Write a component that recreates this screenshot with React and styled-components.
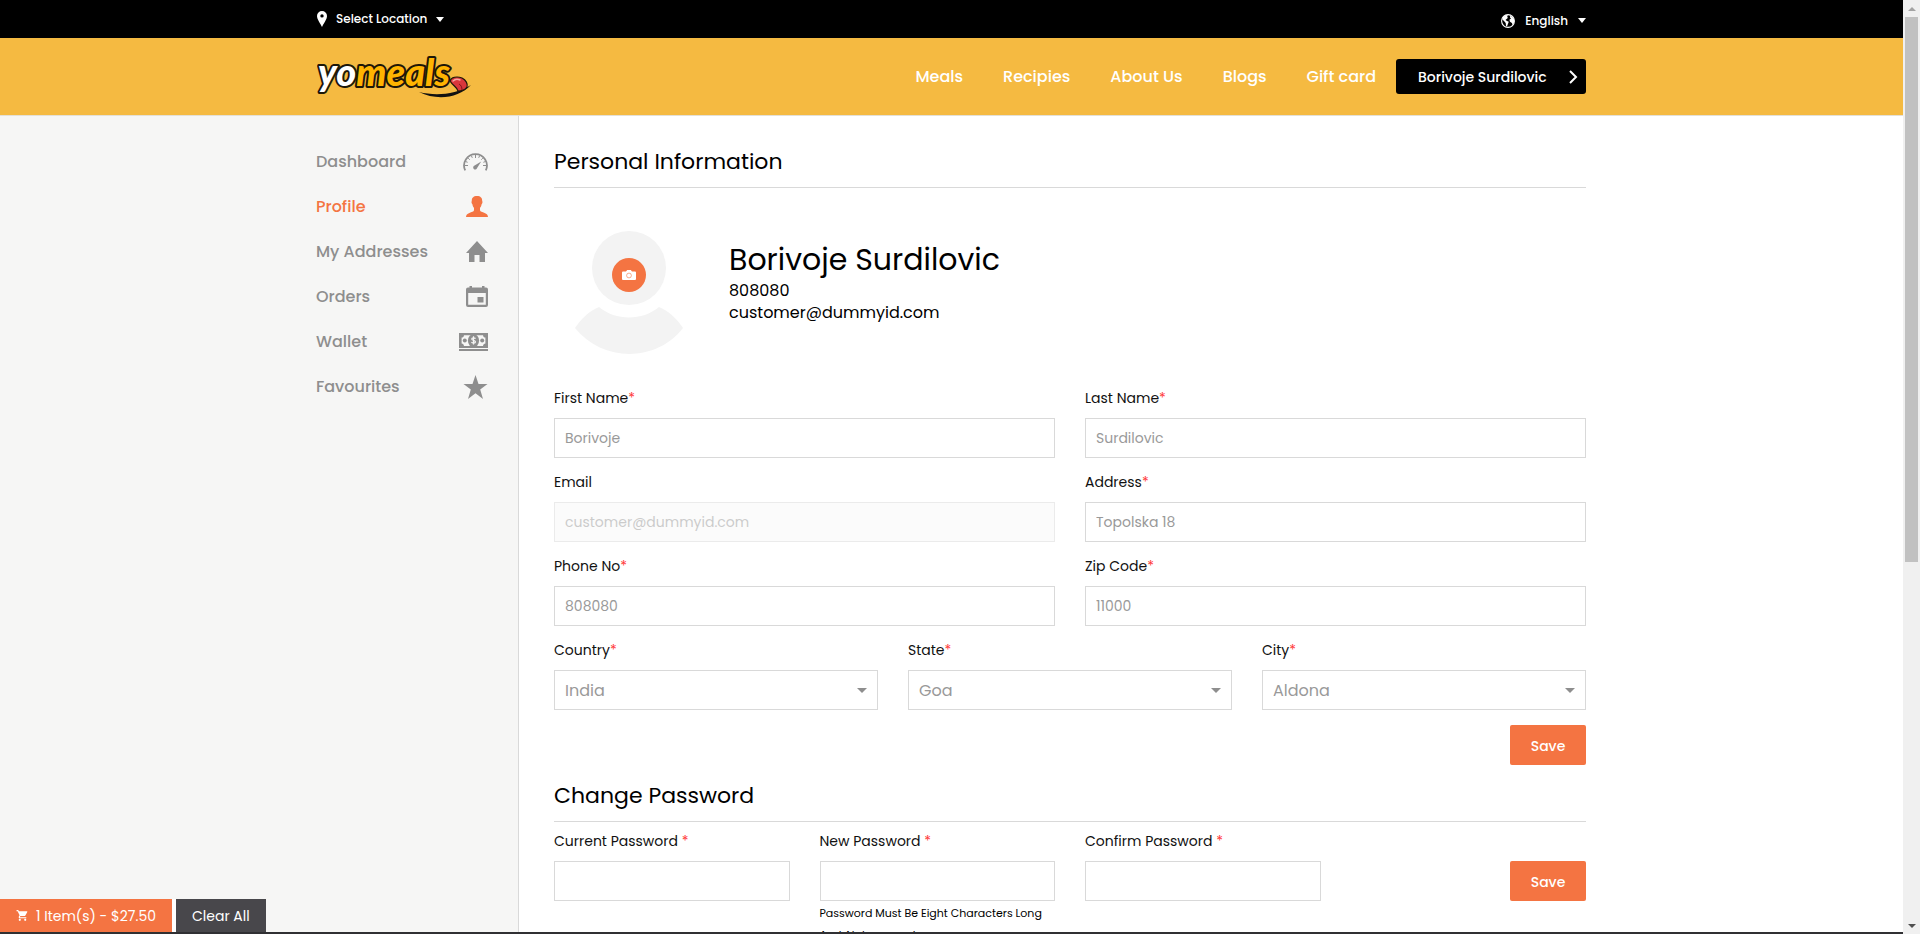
import React from "react";
import styled, { createGlobalStyle, css } from "styled-components";
import { MdShoppingCart } from "react-icons/md";

const orange = "#f47442";
const grey = "#8e8e8e";
const line = "#d9d9d9";

const GlobalStyle = createGlobalStyle`
  *, *::before, *::after { box-sizing: border-box; }
  body {
    margin: 0;
    color: #000;
    background: #fff;
    font-family: Poppins, Inter, "Open Sans", sans-serif;
    font-size: 14px;
    line-height: 20px;
  }
  button, input, select { font: inherit; margin: 0; }
  h1, h2, p, ul { margin: 0; padding: 0; font-weight: 400; }
  a { color: inherit; text-decoration: none; }
`;

const Shell = styled.div`
  position: relative;
  display: flex;
  height: 100vh;
`;

const Page = styled.div`
  flex: 1;
  min-width: 0;
  overflow-y: auto;
  scrollbar-width: none;
  display: flex;
  flex-direction: column;
`;

const gutter = "max(16px, round(up, 50% - 635px, 1px))";

const inset = css`
  padding-left: ${gutter};
  padding-right: ${gutter};
`;

const TopBar = styled.div`
  ${inset}
  flex: none;
  height: 38px;
  display: flex;
  align-items: center;
  justify-content: space-between;
  background: #000;
  color: #fff;
`;

const TopButton = styled.button`
  display: flex;
  align-items: center;
  gap: ${(p) => p.$gap}px;
  padding: ${(p) => p.$drop || 0}px 0 0;
  border: 0;
  background: none;
  color: #fff;
  font-size: 12px;
  font-weight: 500;
`;

const Header = styled.header`
  ${inset}
  flex: none;
  height: 78px;
  display: flex;
  align-items: center;
  justify-content: space-between;
  background: #f5ba41;
  border-bottom: 1px solid #e4e0d6;
`;

const LogoLink = styled.a`
  display: flex;
`;

const Nav = styled.nav`
  display: flex;
  align-items: center;
  gap: 20px;
`;

const NavList = styled.ul`
  display: flex;
  gap: 40px;
  list-style: none;
  color: #fff;
  font-size: 16px;
  font-weight: 500;
`;

const UserButton = styled.button`
  display: flex;
  align-items: center;
  justify-content: space-between;
  gap: 16px;
  min-width: 190px;
  height: 35px;
  padding: 0 8px 0 22px;
  border: 0;
  border-radius: 3px;
  background: #000;
  color: #fff;
  font-weight: 500;
`;

const Body = styled.div`
  flex: 1 0 auto;
  display: flex;
`;

const Sidebar = styled.aside`
  flex: 0 0 max(220px, round(up, 50% - 433px, 1px));
  display: flex;
  justify-content: flex-end;
  padding: 23px 30px 0 16px;
  background: #f6f6f5;
  border-right: 1px solid ${line};
`;

const Menu = styled.ul`
  width: 172px;
  list-style: none;
`;

const MenuLink = styled.a`
  display: flex;
  align-items: center;
  justify-content: space-between;
  height: 45px;
  color: ${(p) => (p.$active ? orange : grey)};
  font-size: 16px;
  font-weight: 500;
`;

const Content = styled.main`
  flex: 1;
  min-width: 0;
  padding: 27px ${gutter} 60px 35px;
`;

const Heading = styled.h2`
  padding-bottom: 6px;
  border-bottom: 1px solid ${line};
  font-size: 22px;
  line-height: 38px;
`;

const ProfileCard = styled.section`
  display: flex;
  gap: 46px;
  padding: 43px 0 34px 21px;
`;

const Avatar = styled.div`
  position: relative;
  width: 108px;
  height: 123px;
`;

const CameraButton = styled.button`
  position: absolute;
  top: 27px;
  left: 37px;
  display: grid;
  place-items: center;
  width: 34px;
  height: 34px;
  padding: 0;
  border: 0;
  border-radius: 50%;
  background: ${orange};
`;

const Identity = styled.div`
  padding-top: 8px;
  font-size: 16px;
  line-height: 22px;
`;

const Name = styled.h1`
  font-size: 30px;
  line-height: 41px;
`;

const Form = styled.form`
  display: flex;
  flex-direction: column;
  gap: 14px;
`;

const Row = styled.div`
  display: grid;
  grid-template-columns: repeat(${(p) => p.$cols}, minmax(0, 1fr));
  gap: 30px;
`;

const FieldBox = styled.div`
  display: flex;
  flex-direction: column;
  gap: 10px;
`;

const Label = styled.label`
  color: #111;
`;

const Required = styled.span`
  color: #ff3a3a;
`;

const control = css`
  width: 100%;
  height: 40px;
  padding: 0 10px;
  border: 1px solid ${line};
  border-radius: 0;
  background: #fff;
  color: #999;
`;

const Input = styled.input`
  ${control}
  &:disabled {
    opacity: 0.5;
    background: #f8f8f8;
  }
`;

const SelectBox = styled.div`
  position: relative;
  color: ${grey};
  svg {
    position: absolute;
    top: 18px;
    right: 11px;
    pointer-events: none;
  }
`;

const Select = styled.select`
  ${control}
  padding-top: 2px;
  appearance: none;
  font-size: 16px;
`;

const Hint = styled.p`
  font-size: 11px;
  line-height: 22px;
  margin-top: -9px;
  white-space: pre-line;
`;

const SaveButton = styled.button`
  width: 76px;
  height: 40px;
  padding: 2px 0 0;
  border: 0;
  border-radius: 2px;
  background: ${orange};
  color: #fff;
  font-weight: 500;
`;

const Actions = styled.div`
  display: flex;
  justify-content: flex-end;
  padding-top: ${(p) => p.$top}px;
`;

const PasswordSection = styled.section`
  padding-top: 12px;
  form { padding-top: 9px; }
`;

const CartBar = styled.div`
  position: absolute;
  left: 0;
  right: 17px;
  bottom: 0;
  display: flex;
  border-bottom: 2px solid #303033;
  pointer-events: none;
`;

const CartButton = styled.button`
  display: flex;
  align-items: center;
  gap: 7px;
  height: 33px;
  padding: 0 16px;
  border: 0;
  border-right: ${(p) => (p.$dark ? "0" : "4px solid #fff")};
  background: ${(p) => (p.$dark ? "#48474b" : orange)};
  background-clip: padding-box;
  color: #fff;
  font-weight: 400;
  white-space: nowrap;
  pointer-events: auto;
`;

const ScrollRail = styled.div`
  flex: 0 0 17px;
  display: flex;
  flex-direction: column;
  align-items: center;
  justify-content: space-between;
  background: #f0f0f0;
`;

const ScrollEnd = styled.div`
  display: grid;
  place-items: center;
  width: 17px;
  height: 17px;
  color: ${(p) => (p.$off ? "#a3a3a3" : "#505050")};
`;

const ScrollTrack = styled.div`
  flex: 1;
  width: 13px;
`;

const ScrollThumb = styled.div`
  height: 60.5%;
  background: #c1c1c1;
`;

function Caret({ width = 8, height = 5 }) {
  return (
    <svg width={width} height={height} viewBox="0 0 10 5" preserveAspectRatio="none" fill="currentColor" aria-hidden="true">
      <path d="M0 0h10L5 5z" />
    </svg>
  );
}

function Pin() {
  return (
    <svg width="10" height="16" viewBox="0 0 10 16" aria-hidden="true">
      <path fill="#fff" fillRule="evenodd" d="M5 0a5 5 0 0 1 5 5c0 3.500-3.500 7.500-5 11C3.500 12.500 0 8.500 0 5a5 5 0 0 1 5-5zm0 3.200a1.700 1.700 0 1 0 0 3.400 1.700 1.700 0 0 0 0-3.400z" />
    </svg>
  );
}

function Globe() {
  return (
    <svg width="14" height="14" viewBox="0 0 14 14" aria-hidden="true">
      <circle cx="7" cy="7" r="6.4" fill="none" stroke="#fff" strokeWidth="1.1" />
      <path fill="#fff" d="M2 3 5 1l2 .5L6 3l1 .8L5.600 5 4.500 6 6 7l1.800.8L7 9.800 6 12.600 5 12l-.3-3L3 7 1.400 5.500zM9 2l2 .4L13 5l.3 3-1.600 3-.8-2L9 7.800 8.400 5.800 10 4.400 9 3.600z" />
    </svg>
  );
}

function Logo() {
  return (
    <svg width="158" height="64" viewBox="0 0 158 64" role="img" aria-label="yomeals">
      <g fontFamily="Lato, sans-serif" fontWeight="900" fontStyle="italic" fontSize="38" stroke="#1d1708" strokeWidth="4" strokeLinejoin="round" paintOrder="stroke">
        <text x="1" y="41">
          <tspan fill="#fff">yo</tspan>
          <tspan fill="#ffb400">meals</tspan>
        </text>
      </g>
      <path fill="#111" d="M102 47c16 4 36 3 52-7-12 13-34 16-52 7z" />
      <path fill="#d9363c" stroke="#1d1708" strokeWidth="1.2" d="M133 36c1-4 7-5 12-3 4 2 6 6 5 9-2 3-6 4-9 4-1-4-5-5-8-10z" />
      <path fill="none" stroke="#f7a5a0" strokeWidth="1.4" strokeLinecap="round" d="M136 36c2-2 5-2 7-1" />
      <path fill="none" stroke="#7e1519" d="M142 39c2 1 3 3 3 6" />
    </svg>
  );
}

const icons = {
  gauge: (
    <svg width="25" height="18" viewBox="0 0 25 18" aria-hidden="true">
      <path d="M2.200 17.400A11.400 11.400 0 1 1 22.800 17.400" fill="none" stroke="currentColor" strokeWidth="1.8" />
      <path d="M12.500 2v3M5.200 5.200l1.500 1.500M19.800 5.200l-1.500 1.500M8.500 3l.8 1.800M16.500 3l-.8 1.800M2 12.500h3M23 12.500h-3M2.800 8.600l1.800.7M22.200 8.600l-1.800.7" stroke="currentColor" strokeWidth="1" />
      <path d="M18.200 8.600 11.600 12.600a2 2 0 1 0 2.500 2.500z" fill="currentColor" />
    </svg>
  ),
  person: (
    <svg width="22" height="21" viewBox="0 0 22 21" fill="currentColor" aria-hidden="true">
      <path d="M11 0c3.600 0 5.400 2 5.200 5 .6.600.3 2.600-.6 3.200-.3 1.800-.9 2.800-1.600 3.600v2.400c.2 1.500 2.500 1.800 4.600 2.700 2.200.9 3.400 2 3.400 4.100H0c0-2.100 1.200-3.200 3.400-4.100 2.100-.9 4.400-1.200 4.600-2.700v-2.400C7.300 11 6.700 10 6.400 8.200 5.500 7.600 5.200 5.600 5.800 5 5.600 2 7.400 0 11 0z" />
    </svg>
  ),
  home: (
    <svg width="22" height="21" viewBox="0 0 22 21" fill="currentColor" aria-hidden="true">
      <path d="M11 0 0 12h3v9h5.500v-7h5v7H19v-9h3z" />
    </svg>
  ),
  calendar: (
    <svg width="22" height="21" viewBox="0 0 22 21" fill="currentColor" aria-hidden="true">
      <path fillRule="evenodd" d="M3.500 0H6v1.500h10V0h2.500v1.500H20a2 2 0 0 1 2 2V19a2 2 0 0 1-2 2H2a2 2 0 0 1-2-2V3.500a2 2 0 0 1 2-2h1.500zM2.200 7v11.800h17.600V7zM11.500 11h6v5.500h-6z" />
    </svg>
  ),
  cash: (
    <svg width="29" height="18" viewBox="0 0 29 18" fill="currentColor" aria-hidden="true">
      <path d="M0 0h29v15H0zM0 16h29v2H0z" />
      <path fill="#f6f6f5" d="M5 2.200h19c.2 1.400 1 2.200 2.400 2.400v6C25 10.800 24.200 11.600 24 13H5c-.2-1.400-1-2.200-2.400-2.400v-6C4 4.400 4.800 3.600 5 2.200z" />
      <ellipse cx="14.500" cy="7.600" rx="5.600" ry="6.500" />
      <circle cx="5.800" cy="7.600" r="2" />
      <circle cx="23.200" cy="7.600" r="2" />
      <path d="M16.500 5.600c-.5-.9-3.700-1.200-3.800.4 0 1.700 3.900 1 3.800 2.900-.1 1.500-3.400 1.500-4 .2M14.500 3.300v8.300" fill="none" stroke="#f6f6f5" strokeWidth="1.200" />
    </svg>
  ),
  star: (
    <svg width="25" height="24" viewBox="0 0 24 24" fill="currentColor" aria-hidden="true">
      <path d="M12 0l3 9h9l-7.300 5.500L19.500 24 12 18.200 4.500 24l2.800-9.500L0 9h9z" />
    </svg>
  ),
};

const menu = [
  ["Dashboard", "gauge"],
  ["Profile", "person"],
  ["My Addresses", "home"],
  ["Orders", "calendar"],
  ["Wallet", "cash"],
  ["Favourites", "star"],
];

function Field({ id, label, required, options, hint, spaced, ...rest }) {
  return (
    <FieldBox>
      <Label htmlFor={id}>
        {label}
        {spaced && " "}
        {required && <Required>*</Required>}
      </Label>
      {options ? (
        <SelectBox>
          <Select id={id} {...rest}>
            {options.map((o) => (
              <option key={o}>{o}</option>
            ))}
          </Select>
          <Caret width={10} height={5} />
        </SelectBox>
      ) : (
        <Input id={id} {...rest} />
      )}
      {hint && <Hint>{hint}</Hint>}
    </FieldBox>
  );
}

export default function App() {
  const stop = (e) => e.preventDefault();
  return (
    <>
      <GlobalStyle />
      <Shell>
        <Page>
          <TopBar>
            <TopButton type="button" $gap={9}>
              <Pin />
              Select Location
              <Caret />
            </TopButton>
            <TopButton type="button" $gap={10} $drop={3}>
              <Globe />
              English
              <Caret />
            </TopButton>
          </TopBar>
          <Header>
            <LogoLink href="#home">
              <Logo />
            </LogoLink>
            <Nav>
              <NavList>
                {["Meals", "Recipies", "About Us", "Blogs", "Gift card"].map((t) => (
                  <li key={t}>
                    <a href="#nav">{t}</a>
                  </li>
                ))}
              </NavList>
              <UserButton type="button">
                Borivoje Surdilovic
                <svg width="10" height="14" viewBox="0 0 10 14" fill="none" stroke="#fff" strokeWidth="2" aria-hidden="true">
                  <path d="M2 1l6 6-6 6" />
                </svg>
              </UserButton>
            </Nav>
          </Header>
          <Body>
            <Sidebar>
              <Menu>
                {menu.map(([text, icon]) => (
                  <li key={text}>
                    <MenuLink href="#menu" $active={text === "Profile"}>
                      {text}
                      {icons[icon]}
                    </MenuLink>
                  </li>
                ))}
              </Menu>
            </Sidebar>
            <Content>
              <Heading>Personal Information</Heading>
              <ProfileCard>
                <Avatar>
                  <svg width="108" height="123" viewBox="0 0 108 123" fill="#f3f3f3" aria-hidden="true">
                    <circle cx="54" cy="37" r="37" />
                    <path d="M24 76c17 14 43 14 60 0 10 4 18 12 24 21-26 34-80 35-108 0 6-9 14-17 24-21z" />
                  </svg>
                  <CameraButton type="button" aria-label="Change photo">
                    <svg width="14" height="10" viewBox="0 0 14 10" aria-hidden="true">
                      <path fill="#fff" d="M1 1.500h3L5.200 0h3.600L10 1.500h3a1 1 0 0 1 1 1V9a1 1 0 0 1-1 1H1a1 1 0 0 1-1-1V2.500a1 1 0 0 1 1-1z" />
                      <circle cx="7" cy="5.500" r="2.400" fill="none" stroke={orange} strokeWidth="0.6" />
                    </svg>
                  </CameraButton>
                </Avatar>
                <Identity>
                  <Name>Borivoje Surdilovic</Name>
                  <p>808080</p>
                  <p>customer@dummyid.com</p>
                </Identity>
              </ProfileCard>
              <Form onSubmit={stop}>
                <Row $cols={2}>
                  <Field id="first" label="First Name" required defaultValue="Borivoje" />
                  <Field id="last" label="Last Name" required defaultValue="Surdilovic" />
                </Row>
                <Row $cols={2}>
                  <Field id="email" label="Email" disabled defaultValue="customer@dummyid.com" />
                  <Field id="address" label="Address" required defaultValue="Topolska 18" />
                </Row>
                <Row $cols={2}>
                  <Field id="phone" label="Phone No" required defaultValue="808080" />
                  <Field id="zip" label="Zip Code" required defaultValue="11000" />
                </Row>
                <Row $cols={3}>
                  <Field id="country" label="Country" required options={["India"]} />
                  <Field id="state" label="State" required options={["Goa"]} />
                  <Field id="city" label="City" required options={["Aldona"]} />
                </Row>
                <Actions $top={1}>
                  <SaveButton>Save</SaveButton>
                </Actions>
              </Form>
              <PasswordSection>
                <Heading>Change Password</Heading>
                <Form onSubmit={stop}>
                  <Row $cols={4}>
                    <Field id="current" label="Current Password" required spaced type="password" />
                    <Field
                      id="new"
                      label="New Password"
                      required
                      spaced
                      type="password"
                      hint={"Password Must Be Eight Characters Long\nAnd Alphanumeric"}
                    />
                    <Field id="confirm" label="Confirm Password" required spaced type="password" />
                    <Actions $top={30}>
                      <SaveButton>Save</SaveButton>
                    </Actions>
                  </Row>
                </Form>
              </PasswordSection>
            </Content>
          </Body>
        </Page>
        <ScrollRail aria-hidden="true">
          <ScrollEnd $off>
            <svg width="8" height="4" viewBox="0 0 8 4" fill="currentColor">
              <path d="M0 4h8L4 0z" />
            </svg>
          </ScrollEnd>
          <ScrollTrack>
            <ScrollThumb />
          </ScrollTrack>
          <ScrollEnd>
            <Caret width={8} height={4} />
          </ScrollEnd>
        </ScrollRail>
        <CartBar>
          <CartButton type="button">
            <MdShoppingCart size={13} />
            1 Item(s) - $27.50
          </CartButton>
          <CartButton type="button" $dark>
            Clear All
          </CartButton>
        </CartBar>
      </Shell>
    </>
  );
}
